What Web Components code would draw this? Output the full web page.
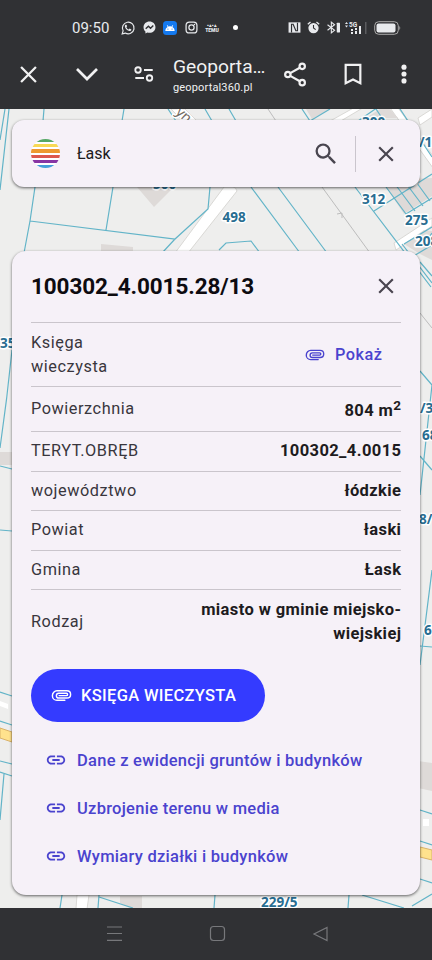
<!DOCTYPE html>
<html lang="pl">
<head>
<meta charset="utf-8">
<title>Geoportal360</title>
<style>
html,body{margin:0;width:432px;height:960px;overflow:hidden;background:#303134}
body{font-family:Roboto,"Noto Sans",sans-serif;color:#1d1b20}
</style>
</head>
<body>
<geo-app></geo-app>
<script>
const icons = {
  close: '<path d="M19 6.41 17.59 5 12 10.59 6.41 5 5 6.41 10.59 12 5 17.59 6.41 19 12 13.41 17.59 19 19 17.59 13.41 12z"/>',
  search: '<path d="M15.5 14h-.79l-.28-.27A6.47 6.47 0 0 0 16 9.5 6.5 6.5 0 1 0 9.5 16c1.61 0 3.09-.59 4.23-1.57l.27.28v.79l5 4.99L20.49 19zm-6 0C7.01 14 5 11.99 5 9.5S7.01 5 9.5 5 14 7.01 14 9.5 11.99 14 9.5 14z"/>',
  link: '<path d="M3.9 12c0-1.71 1.39-3.1 3.1-3.1h4V7H7c-2.76 0-5 2.24-5 5s2.24 5 5 5h4v-1.9H7c-1.71 0-3.1-1.39-3.1-3.1zM8 13h8v-2H8v2zm9-6h-4v1.9h4c1.71 0 3.1 1.39 3.1 3.1s-1.39 3.1-3.1 3.1h-4V17h4c2.76 0 5-2.24 5-5s-2.24-5-5-5z"/>',
  clip: '<path fill="none" stroke="currentColor" stroke-width="1.5" stroke-linecap="round" d="M15.500 17H7.3C4.7 17 2.500 15 2.500 12.200S4.7 7 7.3 7H17.500c2.300 0 4 1.700 4 3.900s-1.700 3.800-4 3.800H9.200c-3.400 0-3.400-5 0-5H17.200c1.500 0 1.500 2.400 0 2.400H9.500"/>',
  down: '<path fill="none" stroke="currentColor" stroke-width="2.7" d="M2 7l10 10L22 7"/>',
  x: '<path fill="none" stroke="currentColor" stroke-width="2.6" d="M3.500 3.500l17 17M20.500 3.500l-17 17"/>',
  tune: '<g fill="none" stroke="currentColor" stroke-width="2"><circle cx="5.500" cy="7.6" r="3"/><path d="M12 7.6h9.500M2.500 16.4H12"/><circle cx="18" cy="16.4" r="3"/></g>',
  share: '<g fill="none" stroke="currentColor" stroke-width="2.300"><circle cx="19" cy="3.5" r="2.8"/><circle cx="4" cy="12" r="2.8"/><circle cx="19" cy="20.5" r="2.8"/><path d="M6.5 10.6 16.5 4.9M6.5 13.4l10 5.7"/></g>',
  bookmark: '<path fill="none" stroke="currentColor" stroke-width="2.4" d="M4 2h16v20l-8-4-8 4z"/>',
  more: '<circle cx="12" cy="4.5" r="2.8"/><circle cx="12" cy="12" r="2.8"/><circle cx="12" cy="19.5" r="2.8"/>',
  whatsapp: '<path fill="none" stroke="currentColor" stroke-width="2" d="M2 22l1.6-5.2A10 10 0 1 1 7.4 20.700z"/><path d="M8 6.500c-1 .5-2 2-1 4.300 1.500 3.500 4 5.800 7.400 6.400 2 .3 3.400-1 3.400-2.600l-3-1.600-1.600 1.600c-1.700-.6-3.200-2-4-3.900L10.500 9 9.300 6.300z"/>',
  messenger: '<path d="M12 1C5.700 1 1 5.400 1 11.400c0 3.200 1.300 5.900 3.500 7.800V23l3.500-1.900c1.200.4 2.500.6 4 .6 6.300 0 11-4.400 11-10.300S18.300 1 12 1z"/><path fill="none" stroke="#303134" stroke-width="2.600" d="M5 14.500l5-5 4 4 5-5"/>',
  android: '<rect width="24" height="24" rx="6" fill="#1479ee"/><path fill="#fff" d="M4 17c0-3 1.500-5.500 4-6.800L6.500 7.500l1-.6L9 9.600a9 9 0 0 1 6 0l1.500-2.700 1 .6-1.500 2.700c2.500 1.300 4 3.800 4 6.800z"/><circle cx="8.500" cy="13.800" r="1" fill="#1479ee"/><circle cx="15.500" cy="13.800" r="1" fill="#1479ee"/>',
  instagram: '<g fill="none" stroke="currentColor" stroke-width="2.300"><rect x="2" y="2" width="20" height="20" rx="6"/><circle cx="12" cy="12" r="4.800"/></g><circle cx="17.500" cy="6.500" r="1.400"/>',
  nfc: '<path d="M1 2.500h22v19H1z"/><path fill="none" stroke="#303134" stroke-width="2.200" d="M6.500 21V6h3l5 12h3V3"/>',
  alarm: '<circle cx="12" cy="13" r="9.500"/><path fill="none" stroke="currentColor" stroke-width="2.500" d="M1.500 6l5-4M22.500 6l-5-4"/><path fill="none" stroke="#303134" stroke-width="2" d="M12 7.500V13l4 3"/>',
  bluetooth: '<path fill="none" stroke="currentColor" stroke-width="2" d="M1 7l13 10-6 5V2l6 5L1 17"/><rect x="18" y="3" width="6" height="18" rx="1"/>'
};
class UiIcon extends HTMLElement {
  connectedCallback() {
    const s = this.getAttribute('size') || 24;
    this.attachShadow({mode: 'open'}).innerHTML =
      `<style>:host{display:block;flex:none;width:${s}px;height:${s}px}svg{display:block;width:100%;height:100%;fill:currentColor;overflow:visible}</style><svg viewBox="0 0 24 24">${icons[this.getAttribute('name')]}</svg>`;
  }
}
customElements.define('ui-icon', UiIcon);

function define(name, html) {
  const t = document.createElement('template');
  t.innerHTML = html;
  customElements.define(name, class extends HTMLElement {
    connectedCallback() {
      if (!this.shadowRoot) this.attachShadow({mode: 'open'}).append(t.content.cloneNode(true));
    }
  });
}

define('status-bar', `<style>
:host{display:flex;align-items:center;height:37px;padding:18px 0 0 72px;box-sizing:border-box;color:#e8eaed}
.time{font-size:15px;line-height:18px;width:49px;white-space:nowrap}
.temu{font-size:5px;line-height:5px;font-weight:900;width:16px;text-align:center;margin-left:6px}
.dot{width:5px;height:5px;border-radius:50%;background:#fff;margin-left:13px}
.net{display:block;width:24px;height:16px;margin-left:4px}
.bat{display:block;width:27px;height:14px;margin-left:6px}
svg text{font:700 6.500px Roboto,sans-serif}
</style>
<span class="time">09:50</span>
<ui-icon name="whatsapp" size="14"></ui-icon>
<ui-icon name="messenger" size="13" style="margin-left:8px"></ui-icon>
<ui-icon name="android" size="14" style="margin-left:7px"></ui-icon>
<ui-icon name="instagram" size="13" style="margin-left:8px"></ui-icon>
<span class="temu">▪▴▪▴<br>TEMU</span><span class="dot"></span>
<ui-icon name="nfc" size="13" style="margin-left:50px"></ui-icon>
<ui-icon name="alarm" size="13" style="margin-left:6px"></ui-icon>
<ui-icon name="bluetooth" size="13" style="margin-left:7px"></ui-icon>
<svg class="net" viewBox="0 0 24 16" fill="#e8eaed"><path d="M1 4l1.500-2L4 4zM1 5.500h3L2.500 7.500z"/><text x="5" y="7">5G</text><path d="M7 9h2v2H7zM7 12h2v2H7zM11 8h2v2h-2zM11 11h2v3h-2zM15 6h2v8h-2z"/><path fill="#5b5c5f" d="M21 2h1.500v12H21z"/></svg>
<svg class="bat" viewBox="0 0 27 14"><rect x=".7" y=".7" width="23.600" height="12.600" rx="4" fill="none" stroke="#aaa"/><rect x="2.500" y="2.500" width="19" height="9" rx="2" fill="#e8eaed"/><path d="M25.500 4.500q1.500 2.500 0 5z" fill="#ccc"/></svg>`);

define('browser-bar', `<style>
:host{display:flex;align-items:center;height:72px;padding:2px 17px 0 18px;box-sizing:border-box;color:#f1f1f2}
.page{width:94px;margin-left:18px;padding-top:3px;white-space:nowrap}
.page div{font-size:19.200px;line-height:23px}
.page small{display:block;font-size:11px;line-height:19px;letter-spacing:.15px}
</style>
<ui-icon name="x" size="21"></ui-icon>
<ui-icon name="down" size="24" style="margin-left:36px"></ui-icon>
<ui-icon name="tune" size="22" style="margin-left:34px"></ui-icon>
<div class="page"><div>Geoporta…</div><small>geoportal360.pl</small></div>
<ui-icon name="share" size="23" style="margin-left:17px"></ui-icon>
<ui-icon name="bookmark" size="22" style="margin-left:35px"></ui-icon>
<ui-icon name="more" size="22" style="margin-left:29px"></ui-icon>`);

define('parcel-map', `<style>
:host{display:block}svg{display:block;width:432px;height:799px}
.p{fill:none;stroke:#62b4c8;stroke-width:1.200}
.b{fill:#dedad8}.w{fill:#fff;stroke:#d2d0cd;stroke-width:.8}
.g{fill:none;stroke:#bdbdbd;stroke-width:1}
text{font:700 13.500px "Noto Sans",sans-serif;fill:#286d91;stroke:#fff;stroke-width:3px;paint-order:stroke;stroke-linejoin:round}
</style>
<svg viewBox="0 109 432 799"><rect y="109" width="432" height="799" fill="#eeeeed"/>
<path class="w" d="M224 187L175 253h13L237 191q-1-4-4-4z"/>
<path class="w" d="M171 109h14l20 20h-14zM334 125l32-19h-9l-34 19zM394 243l38-25v8l-36 24zM420 125l12-8v-8l-14 9zM388 105l50 70v-12l-42-58z"/>
<path class="b" d="M137 187l17 20 20-20zM101 244l32 3v6h-32zM306 109l6 10 18-10zM366 118l20-13 12 13zM386 187l18 27 28-18v-18l-20 1zM404 244l20-14 8 1v29l-12-6zM0 452h14v13H0zM418 761l14 2v28l-14-3zM120 896h22v12h-12l-10-5z"/>
<g class="p"><path d="M5 109L0 140M9 109L0 190M44 109l-1 12M124 109l-2 12M35 187l-5 34-6 32M113 187l-7 43M30 221l145 18 33-30 2-22M175 239l-13 14M168 109l8 12M205 109l7 12M219 250l7-7 25-2 9 12M251 187l49 66M278 187l49 66M229 109l7 12M302 109l8 12 20-12M355 187l76 100M358 121l23-16M376 109l8 12M400 109l32 48M374 211l58-37M386 187l20 27 26-16M395 184l20 27M405 182l18 24M414 179l16 22M402 244l30 39M404 244l28-17M412 257l20-12M422 247l10-14"/>
<path d="M12 350q-5 50-12 98M0 466l12 3M0 530l12 1M0 692l12 4M0 721l12 4M0 761l12 3M0 772l12 4M4 774L0 820M420 262l12 14M420 371l12 14-12 110M420 456l12 14M432 570l-12 95M420 646l12 1M420 810l12 4M420 841l12 4M420 879l12 4M412 906l20-12M62 895l-2 13M99 895l-1 13M99 897l34 11M215 895l-1 13M349 895l-1 13M362 895l42 13"/></g>
<path class="g" d="M268 109l8 12M322 187l48 66M337 214l5-1v5M420 313l12 15"/>
<path d="M0 728l12 4v10l-12-4zM420 847l12 3v10l-12-3z" fill="#ffe28d" stroke="#d9b269"/>
<path d="M0 701l8 3v5l-8-3zM423 819h6v7h-6z" fill="#fff"/><path class="w" d="M77 895h12l-2 14H76z"/>
<text x="153" y="188.500">500</text><text x="222.500" y="222">498</text><text x="362" y="204">312</text><text x="405" y="224.500">275</text><text x="415" y="246">208</text><text x="362" y="127">300</text><text x="419" y="147">/12</text><text x="412" y="184">7</text><text x="0" y="348">35</text><text x="420" y="413">/3</text><text x="422" y="440">68</text><text x="419" y="524">8/1</text><text x="424" y="635">6</text><text x="261" y="907">229/5</text><text transform="translate(175 113) rotate(42)" style="fill:#746b62;font-weight:400;font-size:14px">yn</text>
</svg>`);

define('search-card', `<style>
:host{display:flex;align-items:center;height:67px;box-sizing:border-box;padding:0 21px 0 19px;border-radius:12px;background:#f6f1f8;box-shadow:0 1px 3px #0009;color:#49454f}
.logo{width:29px;height:29px;border-radius:50%;background:linear-gradient(#55a765 0 2.700px,#fff 2.700px 5px,#f8d955 5px 8.300px,#fff 8.300px 10.300px,#ed992f 10.300px 13.800px,#fff 13.800px 16px,#dc584d 16px 19.300px,#fff 19.300px 21.500px,#8735a4 21.500px 24.500px,#fff 24.500px 26.500px,#45a0da 26.500px)}
span{flex:1;margin-left:17px;font-size:16px;color:#1d1b20}
i{width:1px;height:36px;background:#cac5cd;margin:0 17px}
</style>
<div class="logo"></div><span>Łask</span>
<ui-icon name="search" size="28"></ui-icon><i style="margin-left:15px"></i><ui-icon name="close" size="26"></ui-icon>`);

define('data-row', `<style>
:host{display:flex;align-items:center;justify-content:space-between;box-sizing:border-box;border-top:1px solid #cac5cc;font-size:16.300px;line-height:24px;height:39.600px;letter-spacing:.55px;color:#39363d}
.v{font-size:16.500px;font-weight:700;text-align:right;color:#1d1b20;letter-spacing:.4px;margin-right:-.4px}
</style><span><slot name="label"></slot></span><span class="v"><slot></slot></span>`);

define('link-row', `<style>
:host{display:flex;align-items:center;height:48px;gap:10px;padding-left:14px;color:#4a43ce;font-size:16.500px;font-weight:500;letter-spacing:.27px;white-space:nowrap}
</style><ui-icon name="link" size="22"></ui-icon><span><slot></slot></span>`);

define('parcel-card', `<style>
:host{display:flex;flex-direction:column;height:644px;box-sizing:border-box;padding:0 19px;border-radius:14px;background:#f6f1f8;box-shadow:0 1px 3px #0009}
header{display:flex;align-items:center;justify-content:space-between;height:71px;box-sizing:border-box;color:#49454f;padding:0 2px 1px 0}
h1{margin:0;font-size:22.500px;font-weight:700;color:#0d0b10;letter-spacing:-.1px}
.show{display:flex;align-items:center;gap:9px;margin-right:19px;color:#4a43ce;font-size:16.300px;font-weight:500;letter-spacing:.5px}
sup{font-size:13.500px;line-height:0;vertical-align:6px}
.btn{display:flex;align-items:center;gap:8px;width:234px;height:53px;box-sizing:border-box;padding-left:19px;margin:15px 0 14px;border:0;border-radius:27px;background:#343bff;color:#fff;font:500 16.500px Roboto,sans-serif;letter-spacing:.32px;white-space:nowrap}
</style>
<header><h1>100302_4.0015.28/13</h1><ui-icon name="close" size="26"></ui-icon></header>
<data-row style="height:64px"><span slot="label">Księga<br>wieczysta</span><span class="show"><ui-icon name="clip" size="22"></ui-icon>Pokaż</span></data-row>
<data-row style="height:45px"><span slot="label">Powierzchnia</span><span style="position:relative;top:2px">804 m<sup>2</sup></span></data-row>
<data-row><span slot="label">TERYT.OBRĘB</span>100302_4.0015</data-row>
<data-row><span slot="label">województwo</span>łódzkie</data-row>
<data-row><span slot="label">Powiat</span>łaski</data-row>
<data-row><span slot="label">Gmina</span>Łask</data-row>
<data-row style="height:65px"><span slot="label">Rodzaj</span>miasto w gminie miejsko-<br>wiejskiej</data-row>
<button class="btn"><ui-icon name="clip" size="23"></ui-icon><span>KSIĘGA WIECZYSTA</span></button>
<link-row>Dane z ewidencji gruntów i budynków</link-row>
<link-row>Uzbrojenie terenu w media</link-row>
<link-row>Wymiary działki i budynków</link-row>`);

define('system-nav', `<style>
:host{display:block;height:52px;background:#303134}svg{display:block}
</style><svg width="432" height="52" viewBox="0 908 432 52" fill="none" stroke="#77787b" stroke-width="1.200"><path d="M107 927h15M107 933.500h15M107 940.300h15M327 927.500v13l-13-6.500z"/><rect x="210.500" y="926.500" width="14" height="14" rx="3"/></svg>`);

define('geo-app', `<style>
:host{display:block;width:432px;height:960px;background:#303134}
main{display:grid;height:799px}
parcel-map,.cards{grid-area:1/1}
.cards{z-index:1;display:flex;flex-direction:column;gap:64px;padding:11px 12px}
</style>
<status-bar></status-bar><browser-bar></browser-bar>
<main><parcel-map></parcel-map><div class="cards"><search-card></search-card><parcel-card></parcel-card></div></main>
<system-nav></system-nav>`);
</script>
</body>
</html>
